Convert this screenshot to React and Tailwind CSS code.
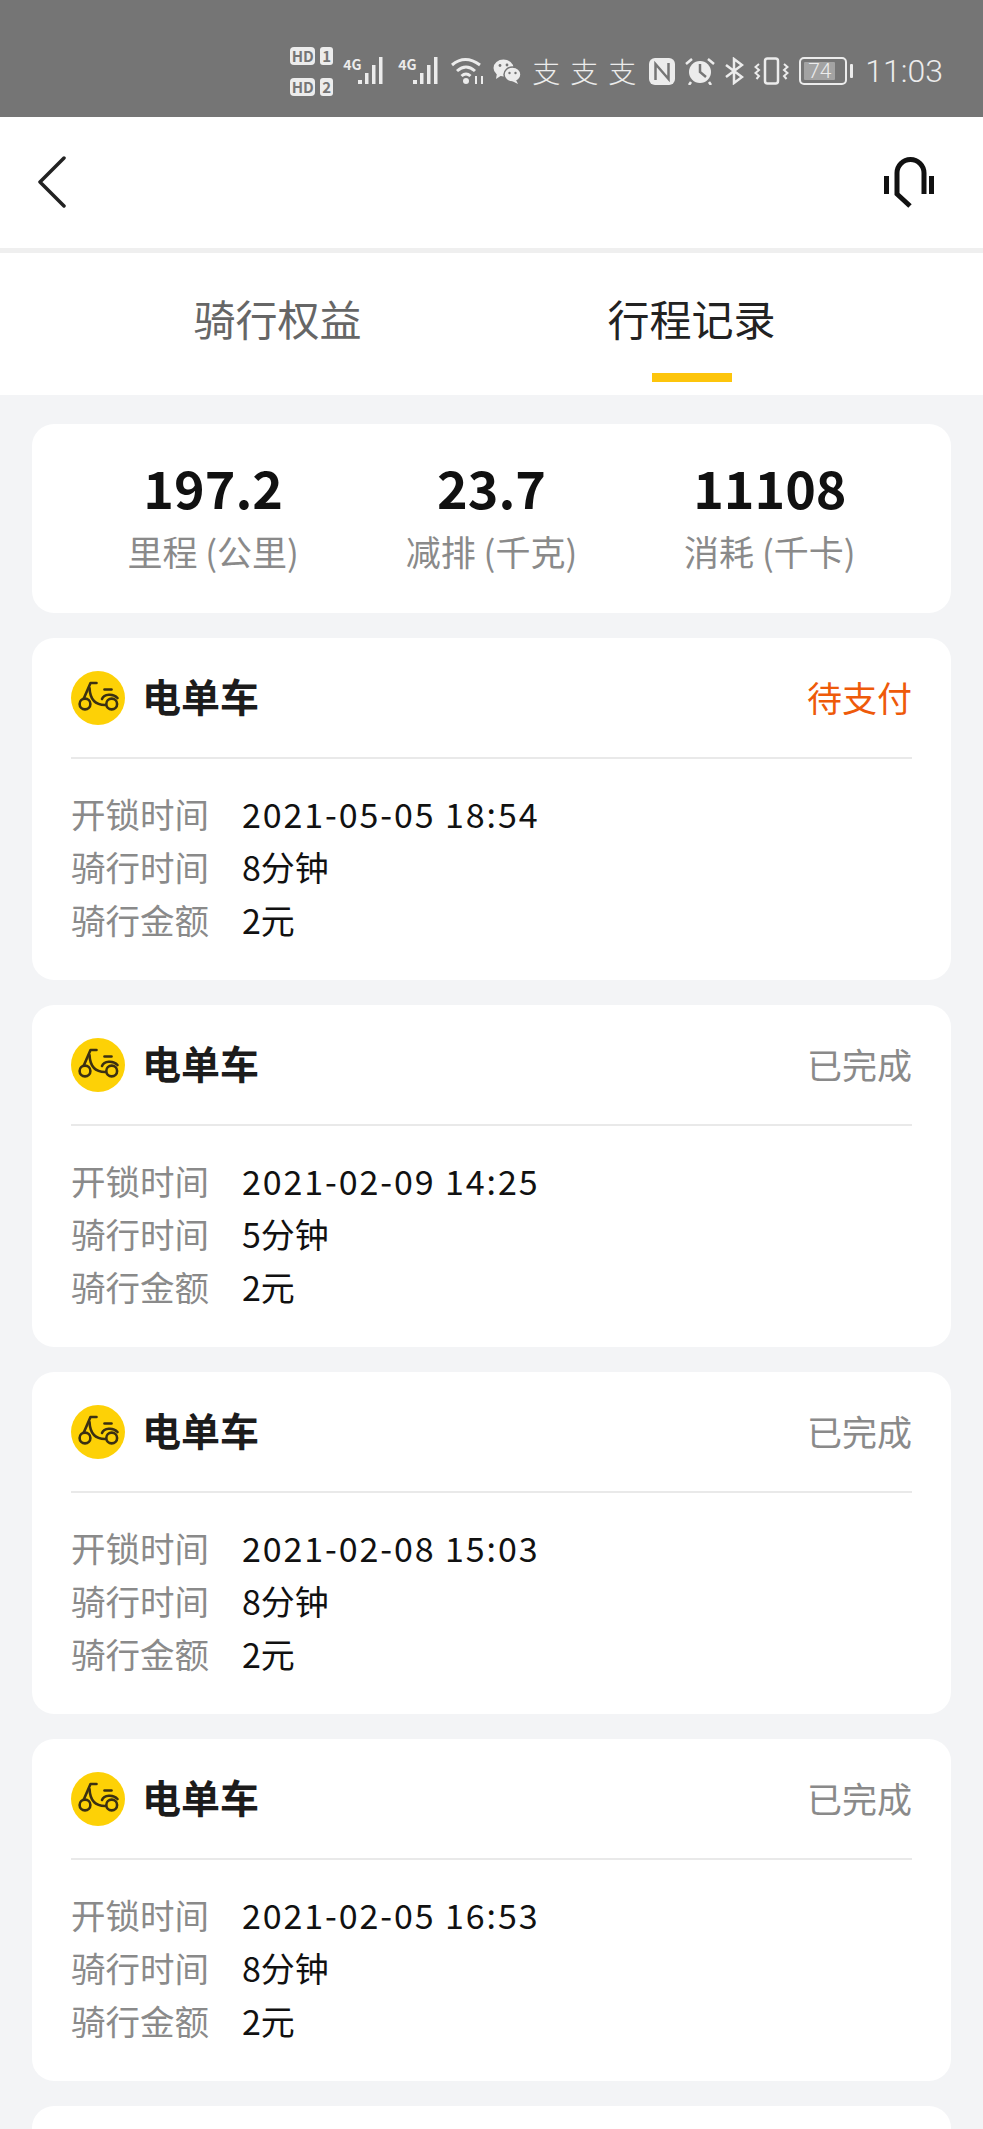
import { useState } from "react";

const FONT = { fontFamily: '"Noto Sans CJK SC", "Noto Sans", sans-serif' };

const rides = [
  { status: "待支付", orange: true, start: "2021-05-05 18:54", time: "8分钟", money: "2元" },
  { status: "已完成", start: "2021-02-09 14:25", time: "5分钟", money: "2元" },
  { status: "已完成", start: "2021-02-08 15:03", time: "8分钟", money: "2元" },
  { status: "已完成", start: "2021-02-05 16:53", time: "8分钟", money: "2元" },
];

const stats = [
  { value: "197.2", label: "里程 (公里)" },
  { value: "23.7", label: "减排 (千克)" },
  { value: "11108", label: "消耗 (千卡)" },
];

/* ================= STATUS BAR ICONS ================= */
function SimBadge({ n }) {
  return (
    <div className="flex items-center gap-[5px]">
      <span className="flex h-[18px] w-[25px] items-center justify-center rounded-[4px] bg-[#ececec] text-[15px] font-bold leading-none text-[#757575]">
        HD
      </span>
      <span className="flex h-[18px] w-[13px] items-center justify-center rounded-[3px] bg-[#ececec] text-[15px] font-bold leading-none text-[#757575]">
        {n}
      </span>
    </div>
  );
}

function Signal() {
  return (
    <div className="relative h-[28px] w-[44px]">
      <span className="absolute left-0 top-[1px] text-[14px] font-bold leading-[13px] text-[#ececec]">4G</span>
      <svg width="44" height="28" viewBox="0 0 44 28" fill="#ececec">
        <rect x="15" y="23" width="4" height="4" />
        <rect x="22" y="16" width="3.5" height="11" />
        <rect x="29" y="8" width="3.5" height="19" />
        <rect x="36" y="0" width="3.5" height="27" />
      </svg>
    </div>
  );
}

function Wifi() {
  return (
    <svg width="35" height="28" viewBox="0 0 35 28" fill="none" stroke="#ececec" strokeWidth="3">
      <path d="M1 8 Q14 -3 29 8" />
      <path d="M6 14 Q15 6 24 14" />
      <path d="M10.5 19 Q15 15 19.5 19" />
      <circle cx="15" cy="24" r="3" fill="#ececec" stroke="none" />
      <path d="M25 19 V27 M31 19 V27" strokeWidth="2" />
    </svg>
  );
}

function Wechat() {
  return (
    <svg width="28" height="25" viewBox="0 0 28 25" fill="#ececec">
      <ellipse cx="10.5" cy="9" rx="10" ry="8.5" />
      <path d="M4 14 L3 20 L9 16 Z" />
      <ellipse cx="19.5" cy="15.5" rx="8.5" ry="7.5" stroke="#757575" strokeWidth="1.5" />
      <path d="M23 21 L25 25 L19 22 Z" />
      <circle cx="7" cy="6.5" r="1.4" fill="#757575" />
      <circle cx="14" cy="6" r="1.4" fill="#757575" />
      <circle cx="16.5" cy="14" r="1.2" fill="#757575" />
      <circle cx="22.5" cy="14" r="1.2" fill="#757575" />
    </svg>
  );
}

function Nfc() {
  return (
    <svg width="26" height="27" viewBox="0 0 26 27">
      <rect width="26" height="27" rx="6" fill="#ececec" />
      <path d="M6.5 22 V6 L19.5 21 V5" fill="none" stroke="#757575" strokeWidth="2.5" />
    </svg>
  );
}

function Alarm() {
  return (
    <svg width="30" height="28" viewBox="0 0 30 28" fill="none">
      <circle cx="15" cy="15" r="11" fill="#ececec" />
      <path d="M15 7 V15 L21 20" stroke="#757575" strokeWidth="2.5" />
      <path d="M1 7 L7 2 M29 7 L23 2 M6 25 L4 28 M24 25 L26 28" stroke="#ececec" strokeWidth="2.5" />
    </svg>
  );
}

function Bluetooth() {
  return (
    <svg width="19" height="28" viewBox="0 0 19 28" fill="none" stroke="#ececec" strokeWidth="2.5">
      <path d="M1 8 L17 20 L9 26 V2 L17 8 L1 20" />
    </svg>
  );
}

function Vibrate() {
  return (
    <svg width="35" height="28" viewBox="0 0 35 28" fill="none" stroke="#ececec" strokeWidth="2">
      <rect x="11" y="1.5" width="13" height="25" rx="2.5" strokeWidth="2.5" />
      <path d="M5 7 L1.5 10 L5 13 L1.5 16 L5 19 L2.5 22" />
      <path d="M30 7 L33.5 10 L30 13 L33.5 16 L30 19 L32.5 22" />
    </svg>
  );
}

function Battery() {
  return (
    <div className="flex items-center gap-[3px]">
      <div className="flex h-[28px] w-[48px] items-center rounded-[5px] border-[2px] border-[#ececec] p-[3px]">
        <div
          className="flex h-full w-[31px] items-center justify-center rounded-[1px] bg-[#a3a3a3] text-[21px] font-light leading-none text-[#ececec]"
          style={{ fontFamily: "Roboto, sans-serif" }}
        >
          74
        </div>
      </div>
      <div className="h-[14px] w-[3px] rounded-[1px] bg-[#ececec]" />
    </div>
  );
}

function StatusBar() {
  return (
    <div className="flex h-[117px] items-center justify-end bg-[#757575] pr-[40px] pt-[25px]">
      <div className="mr-[10px] flex flex-col gap-[13px]">
        <SimBadge n="1" />
        <SimBadge n="2" />
      </div>
      <div className="flex items-center gap-[11px]">
        <Signal />
        <Signal />
      </div>
      <div className="ml-[9px] flex items-center gap-[7px]">
        <Wifi />
        <Wechat />
      </div>
      <div className="ml-[11px] flex items-center gap-[10px] text-[28px] font-light leading-none text-[#ececec]">
        <span>支</span>
        <span>支</span>
        <span>支</span>
      </div>
      <div className="ml-[13px] flex items-center gap-[10px]">
        <Nfc />
        <Alarm />
        <Bluetooth />
        <Vibrate />
        <Battery />
      </div>
      <span className="ml-[12px] text-[32px] font-light leading-none text-[#ececec]" style={{ fontFamily: "Roboto, sans-serif" }}>
        11:03
      </span>
    </div>
  );
}

/* ================= BIKE ICON ================= */
function BikeIcon() {
  return (
    <svg width="54" height="54" viewBox="0 0 54 54" className="shrink-0" fill="none">
      <circle cx="27" cy="27" r="27" fill="#fdd106" />
      <g stroke="#3b3012" strokeWidth="2.6" strokeLinecap="round" strokeLinejoin="round">
        <circle cx="14" cy="33" r="5.4" />
        <circle cx="40.7" cy="33" r="5.4" />
        <path d="M25.5 12 H19.5 L13 27" />
        <path d="M18.5 17 C19 27 23 34 34 34" />
        <path d="M33.5 18.5 H40.5" />
        <path d="M31 28 C33 23 42 22 46.5 27" />
      </g>
    </svg>
  );
}

/* ================= RIDE CARD ================= */
function RideCard({ ride }) {
  const rows = [
    ["开锁时间", ride.start],
    ["骑行时间", ride.time],
    ["骑行金额", ride.money],
  ];
  return (
    <div className="rounded-[22px] bg-white px-[39px]">
      <div className="flex h-[121px] items-center border-b-[2px] border-[#e9e9e9]">
        <BikeIcon />
        <span className="-mt-[5px] ml-[17px] text-[39px] font-bold leading-none text-[#1c1c1c]">电单车</span>
        <span className={`-mt-[3px] ml-auto text-[35px] leading-none ${ride.orange ? "text-[#ee5a0a]" : "text-[#8a8a8a]"}`}>
          {ride.status}
        </span>
      </div>
      <div className="pb-[34px] pt-[28px]">
        {rows.map(([label, value]) => (
          <div key={label} className="flex h-[53px] items-center text-[34px] leading-none">
            <span className="w-[171px] text-[34.5px] text-[#8a8a8a]">{label}</span>
            <span className={`text-[#111111] ${value.length > 5 ? "tracking-[1.9px]" : ""}`}>{value}</span>
          </div>
        ))}
      </div>
    </div>
  );
}

export default function App() {
  const [tab, setTab] = useState(1);

  return (
    <div className="h-screen overflow-hidden bg-[#f3f4f6]" style={FONT}>
      <StatusBar />

      {/* ================= HEADER ================= */}
      <div className="flex h-[136px] items-center justify-between border-b-[5px] border-[#efefef] bg-white pb-[2px] pl-[37px] pr-[49px]">
        <svg width="30" height="52" viewBox="0 0 30 52" fill="none" stroke="#222222" strokeWidth="3.5" strokeLinecap="round" strokeLinejoin="round">
          <path d="M27 2 L3 26 L27 50" />
        </svg>
        <svg width="54" height="54" viewBox="20 14 54 54" fill="none" stroke="#111111">
          <path d="M64 53 V32 a13.5 13.5 0 0 0 -27 0 V53 L50 65" strokeWidth="5" />
          <path d="M26.5 35 V53 M71.5 35 V53" strokeWidth="5" />
        </svg>
      </div>

      {/* ================= TABS ================= */}
      <div className="flex h-[142px] justify-center bg-white pr-[14px] text-[42px] leading-none">
        {["骑行权益", "行程记录"].map((name, i) => (
          <button
            key={name}
            onClick={() => setTab(i)}
            className={`relative w-[414px] pb-[13px] ${tab === i ? "text-[#222222]" : "text-[#666666]"}`}
          >
            {name}
            {tab === i && (
              <span className="absolute bottom-[13px] left-1/2 h-[9px] w-[80px] -translate-x-1/2 bg-[#fdc50c]" />
            )}
          </button>
        ))}
      </div>

      <div className="flex flex-col gap-[25px] px-[32px] pt-[29px]">
        {/* ================= STATS ================= */}
        <div className="grid h-[189px] grid-cols-3 rounded-[22px] bg-white px-[42px] pt-[35px]">
          {stats.map((s) => (
            <div key={s.label} className="flex flex-col items-center">
              <span className="text-[52px] font-bold leading-[56px] text-[#111111]">{s.value}</span>
              <span className="mt-[18px] text-[35px] leading-[36px] text-[#8a8a8a]">{s.label}</span>
            </div>
          ))}
        </div>

        {/* ================= RIDES ================= */}
        {rides.map((ride, i) => (
          <RideCard key={i} ride={ride} />
        ))}
        <div className="h-[342px] shrink-0 rounded-[22px] bg-white" />
      </div>
    </div>
  );
}
